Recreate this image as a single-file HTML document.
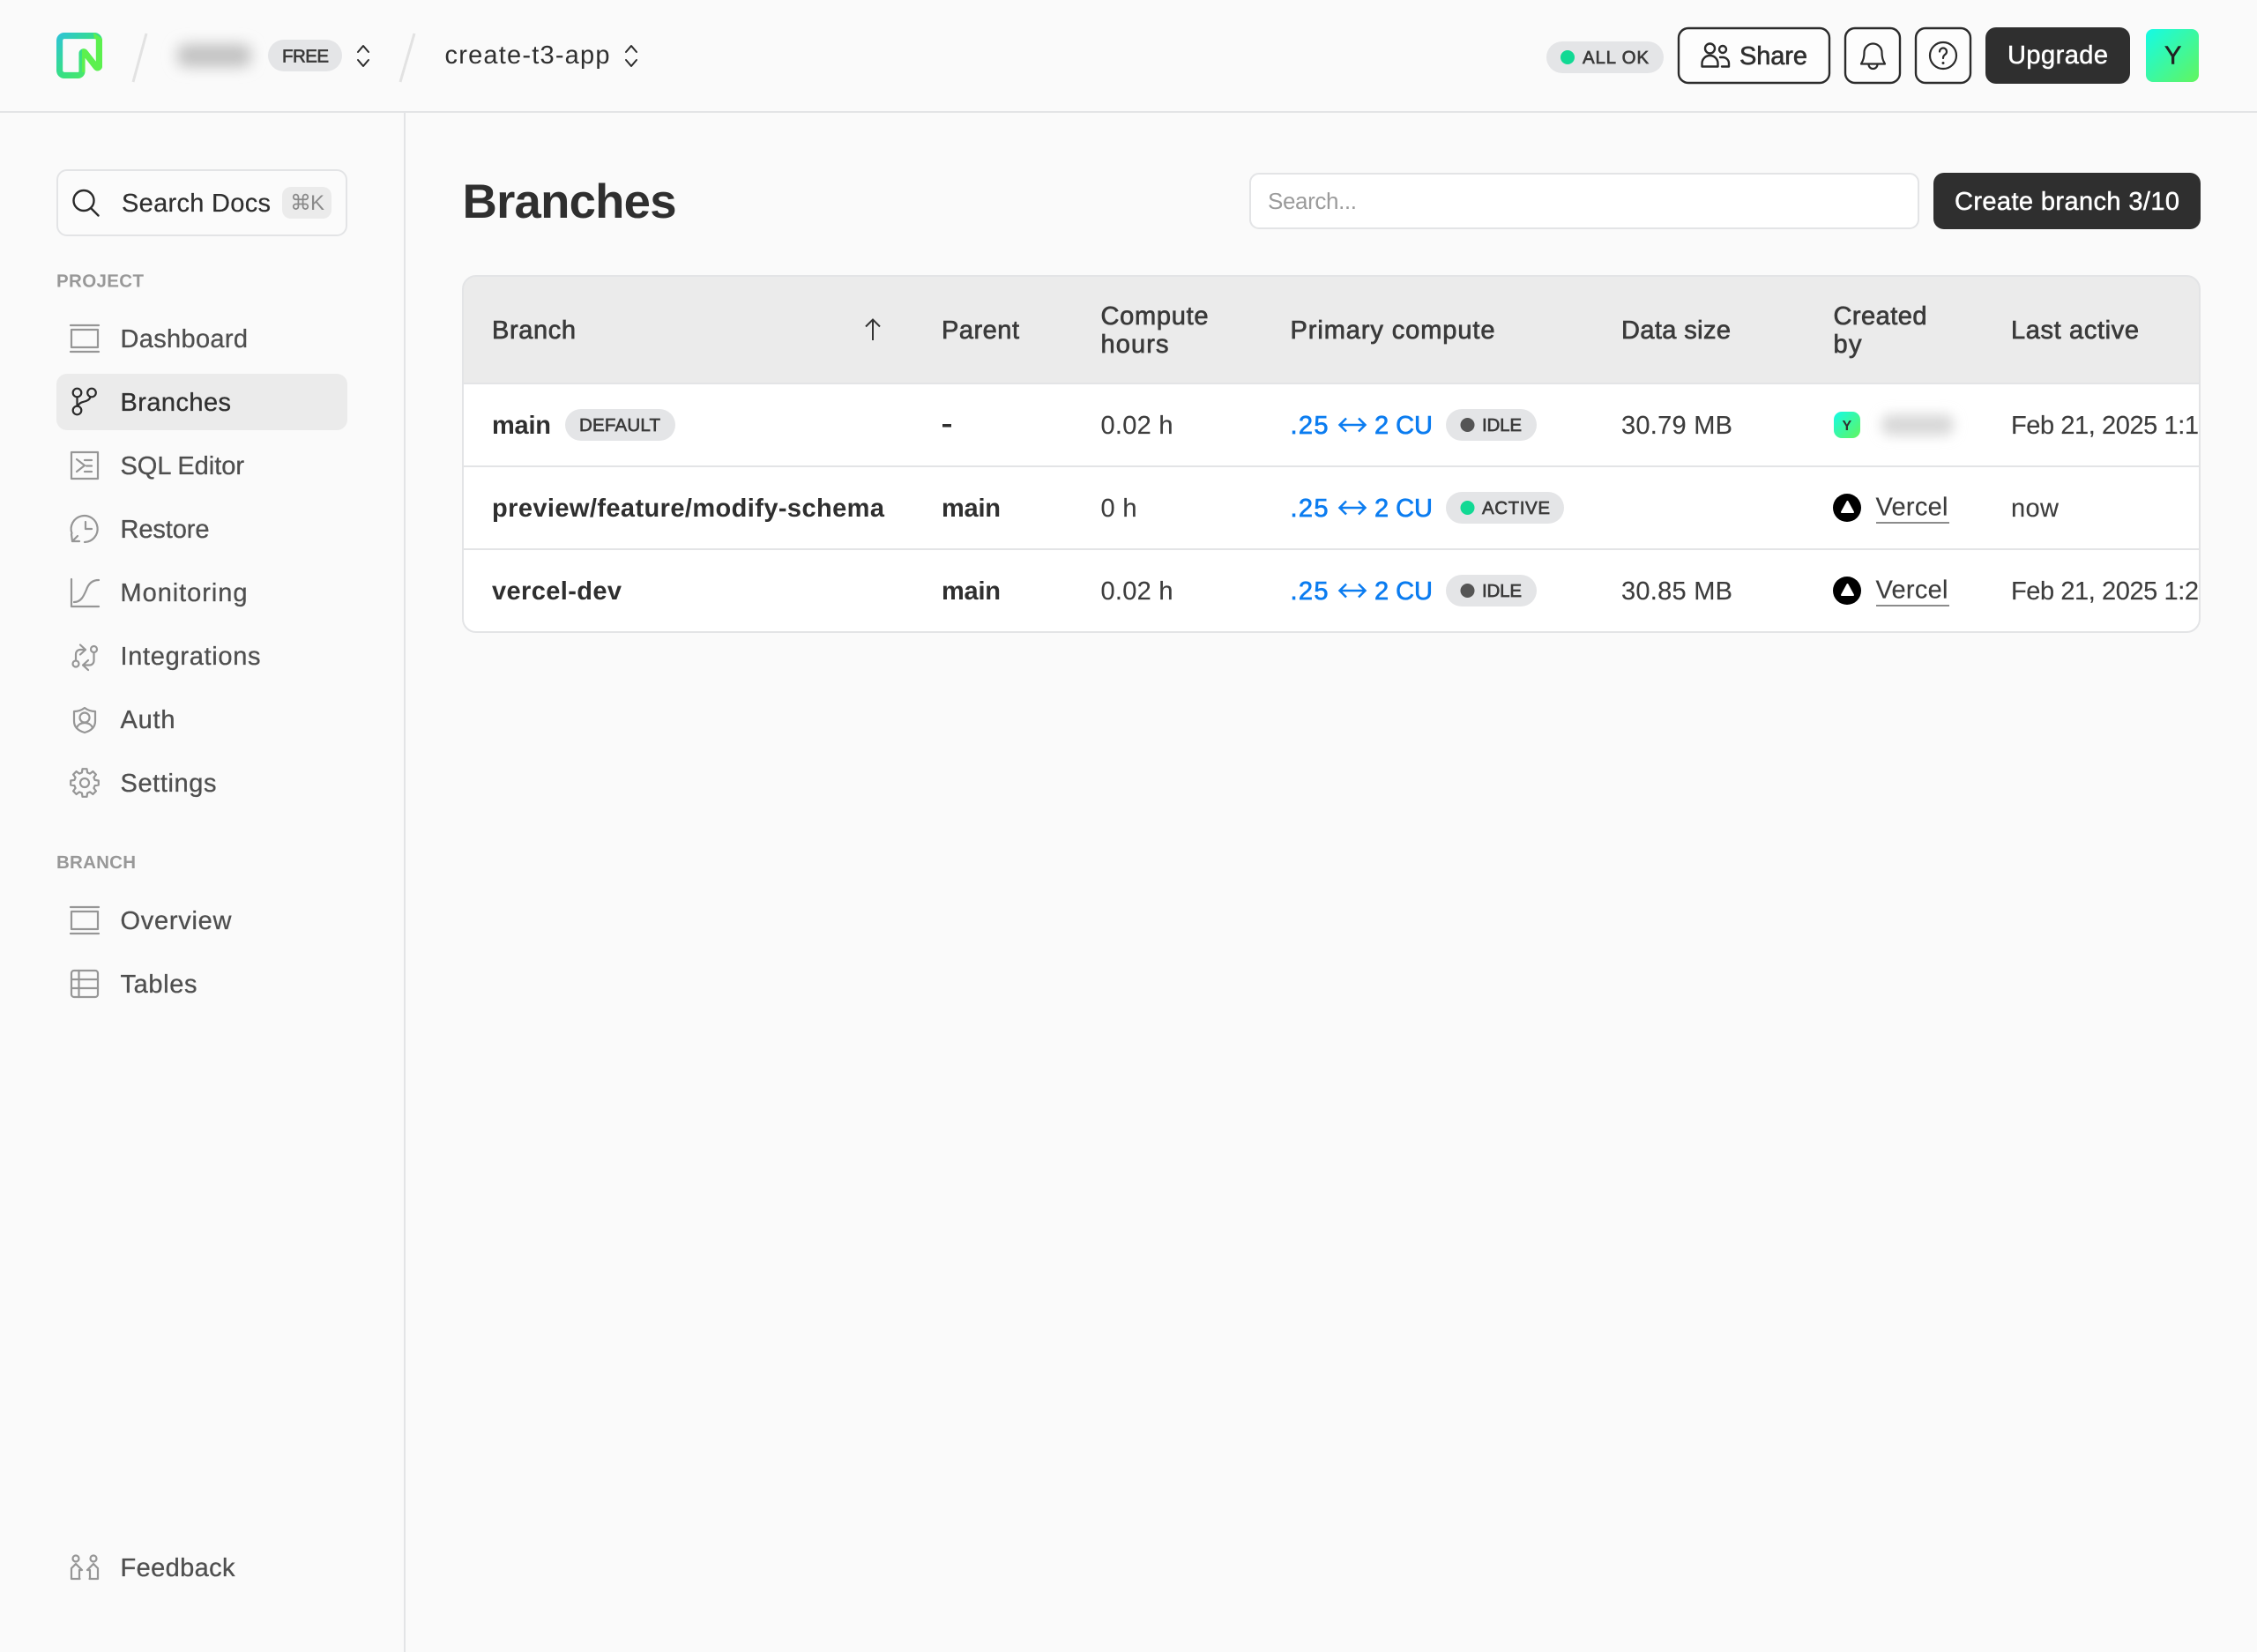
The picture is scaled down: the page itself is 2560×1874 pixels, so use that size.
<!DOCTYPE html>
<html lang="en">
<head>
<meta charset="utf-8">
<title>Branches</title>
<style>
html,body{margin:0;padding:0;background:#fafafa;width:2560px;height:1874px;overflow:hidden}
svg{display:block;position:absolute;left:0;top:0}
text{font-family:"Liberation Sans","DejaVu Sans",sans-serif;font-size:29px;fill:#2f2f2f;text-rendering:geometricPrecision;white-space:pre}
.m{stroke:#2f2f2f;stroke-width:.6px}
.b{font-weight:700}
.nav{fill:#4f4f4f;stroke:#4f4f4f;stroke-width:.3px}
.th{fill:#3a3a3a;stroke:#3a3a3a;stroke-width:.7px}
.sec{font-size:20.5px;font-weight:700;fill:#989898}
.pill{font-size:20.5px;fill:#3a3a3a;stroke:#3a3a3a;stroke-width:.65px}
.td{fill:#3d3d3d;stroke:#3d3d3d;stroke-width:.15px}
.blue{fill:#0b7cf0;stroke:#0b7cf0;stroke-width:.7px}
.w{fill:#fff;stroke:#fff;stroke-width:.5px}
.ic{fill:none;stroke:#969696;stroke-width:2.2;stroke-linecap:round;stroke-linejoin:round}
.ik{fill:none;stroke:#2b2b2b;stroke-width:2.4;stroke-linecap:round;stroke-linejoin:round}
</style>
</head>
<body>
<svg xmlns="http://www.w3.org/2000/svg" width="2560" height="1874" viewBox="0 0 2560 1874">
<defs>
<linearGradient id="lg" x1="0" y1="0" x2="1" y2="1"><stop offset="0" stop-color="#2cbdea"/><stop offset=".5" stop-color="#36df85"/><stop offset="1" stop-color="#5cf04e"/></linearGradient>
<linearGradient id="av" x1="0" y1="0" x2="1" y2="1"><stop offset="0" stop-color="#14fbe6"/><stop offset="1" stop-color="#62f55e"/></linearGradient>
<filter id="bl1" x="-50%" y="-100%" width="200%" height="300%"><feGaussianBlur stdDeviation="8"/></filter>
<filter id="bl2" x="-50%" y="-100%" width="200%" height="300%"><feGaussianBlur stdDeviation="7"/></filter>
<clipPath id="tc"><rect x="525" y="313" width="1970" height="404" rx="15"/></clipPath>
<clipPath id="lc"><path transform="translate(64 37) scale(1.4444)" d="M0 6.207A6.207 6.207 0 0 1 6.207 0h23.586A6.207 6.207 0 0 1 36 6.207v20.06c0 3.546-4.488 5.085-6.664 2.286l-6.805-8.754v10.615a5.586 5.586 0 0 1-5.586 5.586H6.207A6.207 6.207 0 0 1 0 29.793V6.207Zm6.207-1.241c-.686 0-1.241.555-1.241 1.24v23.587c0 .686.555 1.242 1.24 1.242h10.925c.343 0 .483-.278.483-.621V16.38c0-3.547 4.488-5.086 6.665-2.286l6.805 8.754V6.207c0-.686.058-1.241-.628-1.241H6.207Z"/></clipPath>
</defs>

<rect width="2560" height="1874" fill="#fafafa"/>

<!-- header -->
<rect x="0" y="126" width="2560" height="2" fill="#e3e4e6"/>
<g clip-path="url(#lc)">
<rect x="60" y="33" width="60" height="60" fill="url(#lg)"/>
<path d="M106 37 116 44V82H93V52H108Z" fill="#5cf04e"/>
</g>
<path d="M166 38 151 93" stroke="#e2e2e2" stroke-width="3" fill="none"/>
<rect x="201" y="50" width="84" height="26" rx="10" fill="#c2c2c2" filter="url(#bl1)"/>
<rect x="304" y="45" width="84" height="36" rx="18" fill="#e4e5e7"/>
<text x="320" y="70.500" class="pill" textLength="53" lengthAdjust="spacing">FREE</text>
<path class="ik" style="stroke-width:2" d="M406 59l6-7 6 7M406 68l6 7 6-7"/>
<path d="M470 38 454 93" stroke="#e2e2e2" stroke-width="3" fill="none"/>
<text x="504.500" y="72" textLength="187" lengthAdjust="spacing">create-t3-app</text>
<path class="ik" style="stroke-width:2" d="M710 59l6-7 6 7M710 68l6 7 6-7"/>

<rect x="1754" y="47" width="133" height="36" rx="18" fill="#e4e5e7"/>
<circle cx="1778" cy="65" r="8" fill="#12d994"/>
<text x="1795" y="72" class="pill" textLength="75" lengthAdjust="spacing">ALL OK</text>

<rect x="1904" y="32" width="171" height="62" rx="11" fill="#fdfdfd" stroke="#2b2b2b" stroke-width="2.400"/>
<g class="ik">
<circle cx="1939.500" cy="55" r="5.500"/>
<path d="M1930.500 75.500v-3.500a9 9 0 0 1 18 0v3.500z"/>
<circle cx="1954" cy="56" r="4"/>
<path d="M1951 65h3a7 7 0 0 1 7 7v3.500h-8"/>
</g>
<text x="1973" y="73" class="m" textLength="77" lengthAdjust="spacing">Share</text>

<rect x="2093" y="32" width="62" height="62" rx="11" fill="#fdfdfd" stroke="#2b2b2b" stroke-width="2.400"/>
<g class="ik" style="stroke-width:2.2">
<path d="M2111 72.500c0-1 3.500-3.500 3.500-13a10 10 0 0 1 20 0c0 9.500 3.500 12 3.500 13z"/>
<path d="M2119.500 73a5 5 0 0 0 10 0"/>
</g>
<rect x="2173" y="32" width="62" height="62" rx="11" fill="#fdfdfd" stroke="#2b2b2b" stroke-width="2.400"/>
<g class="ik" style="stroke-width:2.2">
<circle cx="2204" cy="63" r="15"/>
<path d="M2200 58.500a4 4 0 1 1 6 3.500c-1.300 1-2 2-2 4"/>
</g>
<circle cx="2204" cy="71.500" r="1.500" fill="#2b2b2b"/>

<rect x="2252" y="31" width="164" height="64" rx="12" fill="#2f2f2f"/>
<text x="2277" y="72" class="w" textLength="114" lengthAdjust="spacing">Upgrade</text>
<rect x="2434" y="33" width="60" height="60" rx="8" fill="url(#av)"/>
<text x="2455" y="72.500" textLength="18" lengthAdjust="spacing" style="fill:#222;stroke:#222;stroke-width:.5px">Y</text>

<!-- sidebar -->
<rect x="458" y="128" width="2" height="1746" fill="#e3e4e6"/>
<rect x="65" y="193" width="328" height="74" rx="11" fill="#fbfbfb" stroke="#e3e4e6" stroke-width="2"/>
<g class="ik" style="stroke-width:2.400"><circle cx="95" cy="227.500" r="11.500"/><path d="M103.500 236.500l8 8"/></g>
<text x="138" y="240" textLength="169" lengthAdjust="spacing" style="stroke:#2f2f2f;stroke-width:.2px">Search Docs</text>
<rect x="320" y="212" width="56" height="36" rx="10" fill="#ebebeb"/>
<text x="329" y="238" style="font-size:24px;fill:#8a8a8a" textLength="39" lengthAdjust="spacing">⌘K</text>

<text x="64" y="325.500" class="sec" textLength="99" lengthAdjust="spacing">PROJECT</text>

<rect x="64" y="424" width="330" height="64" rx="12" fill="#ebebeb"/>

<text x="136.500" y="394" class="nav" textLength="144.500" lengthAdjust="spacing">Dashboard</text>
<text x="136.500" y="466" class="nav" style="fill:#303030;stroke:#303030" textLength="125.500" lengthAdjust="spacing">Branches</text>
<text x="136.500" y="538" class="nav" textLength="140.500" lengthAdjust="spacing">SQL Editor</text>
<text x="136.500" y="610" class="nav" textLength="101" lengthAdjust="spacing">Restore</text>
<text x="136.500" y="682" class="nav" textLength="144" lengthAdjust="spacing">Monitoring</text>
<text x="136.500" y="754" class="nav" textLength="159" lengthAdjust="spacing">Integrations</text>
<text x="136.500" y="826" class="nav" textLength="62" lengthAdjust="spacing">Auth</text>
<text x="136.500" y="898" class="nav" textLength="109" lengthAdjust="spacing">Settings</text>
<text x="64" y="985" class="sec" textLength="90" lengthAdjust="spacing">BRANCH</text>
<text x="136.500" y="1054" class="nav" textLength="126" lengthAdjust="spacing">Overview</text>
<text x="136.500" y="1126" class="nav" textLength="87" lengthAdjust="spacing">Tables</text>
<text x="136.500" y="1788" class="nav" textLength="130" lengthAdjust="spacing">Feedback</text>

<g class="ic" stroke-linecap="butt">
<!-- dashboard -->
<path d="M80 369h32M80 399h32"/><rect x="81" y="374" width="30" height="20"/>
<!-- sql -->
<rect x="81" y="513" width="30" height="30"/>
<path d="M87 521l9 7-9 7M96 522h8M98 528.500h6M96 535h8"/>
<!-- restore -->
<path d="M81.500 605a15 15 0 1 1 14.500 10"/><path d="M97 592v8h7"/><path d="M81 606l1 8h8"/><path d="M82 614l6-6"/>
<!-- monitoring -->
<path d="M81 657v31h31"/><path d="M84 683c8 0 11-7 14-14 2-6 6-11 14-11"/>
<!-- integrations -->
<circle cx="106.500" cy="736.500" r="3.500"/><circle cx="86" cy="753" r="3.500"/>
<path d="M86 748v-6a5 5 0 0 1 5-5h6M91 731.500l6 5.500-6 5.500"/>
<path d="M106.500 741.500v8a5 5 0 0 1-5 5h-7.500M100 749l-6 5.500 6 5.500"/>
<!-- auth -->
<path d="M84 807c4 0 8-1 12-4 4 3 8 4 12 4v11c0 7-5 11-12 13-7-2-12-6-12-13z"/>
<circle cx="96" cy="814" r="5.500"/><path d="M87 826c1-4 5-6 9-6s8 2 9 6"/>
<!-- settings -->
<g transform="translate(96 888)">
<path d="M-3.110-11.590-2.500-15.800 2.500-15.800 3.110-11.590 6-10.390 9.400-12.940 12.940-9.400 10.390-6 11.590-3.110 15.800-2.500 15.800 2.500 11.590 3.110 10.390 6 12.940 9.400 9.400 12.940 6 10.390 3.110 11.590 2.500 15.800-2.500 15.800-3.110 11.590-6 10.390-9.400 12.940-12.940 9.400-10.390 6-11.590 3.110-15.800 2.500-15.800-2.500-11.590-3.110-10.390-6-12.940-9.400-9.400-12.940-6-10.390Z"/>
<circle r="5"/>
</g>
<!-- overview -->
<path d="M80 1029h32M80 1059h32"/><rect x="81" y="1034" width="30" height="20"/>
<!-- tables -->
<rect x="81" y="1101" width="30" height="30" rx="3"/><path d="M81 1111h30M81 1121h30M89.500 1101v30"/>
<!-- feedback -->
<circle cx="86" cy="1768" r="3.500"/><circle cx="106" cy="1768" r="3.500"/>
<path d="M90.500 1791H81v-12l5-5 7 7h-3v10"/>
<path d="M101.500 1791H111v-12l-5-5-7 7h3v10"/>
</g>
<g class="ik" style="stroke-width:2.200">
<circle cx="87.500" cy="445.500" r="4.800"/><circle cx="87.500" cy="465.500" r="4.800"/><circle cx="104" cy="445.500" r="4.800"/>
<path d="M87.500 450.300v10.400M102.500 450.300c-1 4-6 5-9.500 6-2 .7-3.500 1.500-4.500 4"/>
</g>

<!-- main title -->
<text x="524.500" y="247" class="b" style="font-size:54.500px" textLength="243" lengthAdjust="spacing">Branches</text>

<rect x="1418" y="197" width="758" height="62" rx="10" fill="#fff" stroke="#e3e4e6" stroke-width="2"/>
<text x="1438" y="237" style="font-size:26px;fill:#9b9b9b" textLength="101" lengthAdjust="spacing">Search...</text>
<rect x="2193" y="196" width="303" height="64" rx="12" fill="#2f2f2f"/>
<text x="2217" y="238" class="w" textLength="255" lengthAdjust="spacing">Create branch 3/10</text>

<!-- table -->
<rect x="525" y="312" width="1970" height="406" rx="16" fill="#fff"/>
<g clip-path="url(#tc)">
<rect x="525" y="312" width="1970" height="123" fill="#ebebeb"/>
<rect x="525" y="434" width="1970" height="2" fill="#e3e4e6"/>
<rect x="525" y="528" width="1970" height="2" fill="#e3e4e6"/>
<rect x="525" y="622" width="1970" height="2" fill="#e3e4e6"/>

<text x="558" y="384" class="th" textLength="95" lengthAdjust="spacing">Branch</text>
<path d="M990 363v23M982 370.500l8-8 8 8" fill="none" stroke="#333" stroke-width="2"/>
<text x="1068" y="384" class="th" textLength="88" lengthAdjust="spacing">Parent</text>
<text x="1248.500" y="368" class="th" textLength="122" lengthAdjust="spacing">Compute</text>
<text x="1248.500" y="400" class="th" textLength="77" lengthAdjust="spacing">hours</text>
<text x="1463.500" y="384" class="th" textLength="232" lengthAdjust="spacing">Primary compute</text>
<text x="1839" y="384" class="th" textLength="124" lengthAdjust="spacing">Data size</text>
<text x="2079.500" y="368" class="th" textLength="106" lengthAdjust="spacing">Created</text>
<text x="2079.500" y="400" class="th" textLength="32" lengthAdjust="spacing">by</text>
<text x="2281" y="384" class="th" textLength="145" lengthAdjust="spacing">Last active</text>

<!-- row 1 -->
<text x="558" y="492" class="b" textLength="67" lengthAdjust="spacing">main</text>
<rect x="641" y="464" width="125" height="36" rx="18" fill="#e4e5e7"/>
<text x="657" y="489" class="pill" textLength="92" lengthAdjust="spacing">DEFAULT</text>
<rect x="1069" y="481" width="10" height="3.500" fill="#2f2f2f"/>
<text x="1248.500" y="492" class="td" textLength="82" lengthAdjust="spacing">0.02 h</text>
<text x="1463.500" y="492" class="blue" textLength="43" lengthAdjust="spacing">.25</text>
<path d="M1520 482h28M1527 474.500l-7.500 7.500 7.500 7.500M1541 474.500l7.500 7.500-7.500 7.500" fill="none" stroke="#0b7cf0" stroke-width="2.500"/>
<text x="1559" y="492" class="blue" textLength="66" lengthAdjust="spacing">2 CU</text>
<rect x="1640" y="464" width="103" height="36" rx="18" fill="#e4e5e7"/>
<circle cx="1664.500" cy="482" r="8" fill="#555"/>
<text x="1681" y="489" class="pill" textLength="45" lengthAdjust="spacing">IDLE</text>
<text x="1839" y="492" class="td" textLength="126" lengthAdjust="spacing">30.79 MB</text>
<rect x="2080" y="467" width="30" height="30" rx="9" fill="url(#av)"/>
<text x="2089.500" y="488" class="b" style="font-size:16px" textLength="11" lengthAdjust="spacing">Y</text>
<rect x="2134" y="470" width="82" height="24" rx="10" fill="#d8d8d8" filter="url(#bl2)"/>
<text x="2281" y="492" class="td" textLength="279" lengthAdjust="spacing">Feb 21, 2025 1:18 PM</text>

<!-- row 2 -->
<text x="558" y="586" class="b" textLength="445" lengthAdjust="spacing">preview/feature/modify-schema</text>
<text x="1068" y="586" class="b" textLength="67" lengthAdjust="spacing">main</text>
<text x="1248.500" y="586" class="td" textLength="41" lengthAdjust="spacing">0 h</text>
<text x="1463.500" y="586" class="blue" textLength="43" lengthAdjust="spacing">.25</text>
<path d="M1520 576h28M1527 568.500l-7.500 7.500 7.500 7.500M1541 568.500l7.500 7.500-7.500 7.500" fill="none" stroke="#0b7cf0" stroke-width="2.500"/>
<text x="1559" y="586" class="blue" textLength="66" lengthAdjust="spacing">2 CU</text>
<rect x="1640" y="558" width="134" height="36" rx="18" fill="#e4e5e7"/>
<circle cx="1664.500" cy="576" r="8" fill="#12d994"/>
<text x="1681" y="583" class="pill" textLength="77" lengthAdjust="spacing">ACTIVE</text>
<circle cx="2095" cy="576" r="16" fill="#000"/>
<path d="M2095.500 569l6.500 12h-13z" fill="#fff" stroke="#fff" stroke-width="2" stroke-linejoin="round"/>
<text x="2127.500" y="584.500" class="td" textLength="82" lengthAdjust="spacing">Vercel</text>
<rect x="2128" y="592" width="83" height="2" fill="#8c8c8c"/>
<text x="2281" y="586" class="td" textLength="54" lengthAdjust="spacing">now</text>

<!-- row 3 -->
<text x="558" y="680" class="b" textLength="147" lengthAdjust="spacing">vercel-dev</text>
<text x="1068" y="680" class="b" textLength="67" lengthAdjust="spacing">main</text>
<text x="1248.500" y="680" class="td" textLength="82" lengthAdjust="spacing">0.02 h</text>
<text x="1463.500" y="680" class="blue" textLength="43" lengthAdjust="spacing">.25</text>
<path d="M1520 670h28M1527 662.500l-7.500 7.500 7.500 7.500M1541 662.500l7.500 7.500-7.500 7.500" fill="none" stroke="#0b7cf0" stroke-width="2.500"/>
<text x="1559" y="680" class="blue" textLength="66" lengthAdjust="spacing">2 CU</text>
<rect x="1640" y="652" width="103" height="36" rx="18" fill="#e4e5e7"/>
<circle cx="1664.500" cy="670" r="8" fill="#555"/>
<text x="1681" y="677" class="pill" textLength="45" lengthAdjust="spacing">IDLE</text>
<text x="1839" y="680" class="td" textLength="126" lengthAdjust="spacing">30.85 MB</text>
<circle cx="2095" cy="670" r="16" fill="#000"/>
<path d="M2095.500 663l6.500 12h-13z" fill="#fff" stroke="#fff" stroke-width="2" stroke-linejoin="round"/>
<text x="2127.500" y="678.500" class="td" textLength="82" lengthAdjust="spacing">Vercel</text>
<rect x="2128" y="686" width="83" height="2" fill="#8c8c8c"/>
<text x="2281" y="680" class="td" textLength="279" lengthAdjust="spacing">Feb 21, 2025 1:25 PM</text>
</g>
<rect x="525" y="313" width="1970" height="404" rx="15" fill="none" stroke="#e3e4e6" stroke-width="2"/>
</svg>
</body>
</html>
